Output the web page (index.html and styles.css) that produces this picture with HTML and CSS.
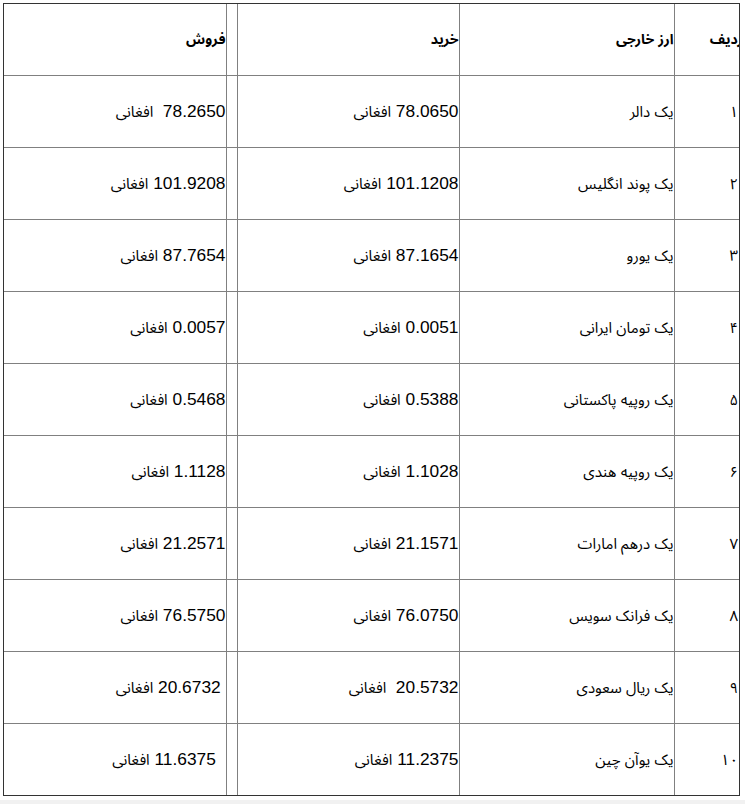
FILE: index.html
```html
<!DOCTYPE html>
<html lang="fa" dir="rtl">
<head>
<meta charset="utf-8">
<title>نرخ ارز</title>
<link rel="stylesheet" href="styles.css">
</head>
<body>
<div class="page">
  <div class="frame">
    <table class="rates">
      <colgroup>
        <col class="c-idx">
        <col class="c-name">
        <col class="c-buy">
        <col class="c-gap">
        <col class="c-sell">
      </colgroup>
      <thead>
        <tr>
          <th class="idx"><span class="clip fa">ردیف</span></th>
          <th><span class="fa">ارز خارجی</span></th>
          <th><span class="fa">خرید</span></th>
          <th></th>
          <th><span class="fa">فروش</span></th>
        </tr>
      </thead>
      <tbody>
        <tr><td class="idx fa">۱</td><td class="fa">یک دالر</td><td>78.0650 <span class="fa">افغانی</span></td><td></td><td>78.2650&nbsp; <span class="fa">افغانی</span></td></tr>
        <tr><td class="idx fa">۲</td><td class="fa">یک پوند انگلیس</td><td>101.1208 <span class="fa">افغانی</span></td><td></td><td>101.9208 <span class="fa">افغانی</span></td></tr>
        <tr><td class="idx fa">۳</td><td class="fa">یک یورو</td><td>87.1654 <span class="fa">افغانی</span></td><td></td><td>87.7654 <span class="fa">افغانی</span></td></tr>
        <tr><td class="idx fa">۴</td><td class="fa">یک تومان ایرانی</td><td>0.0051 <span class="fa">افغانی</span></td><td></td><td>0.0057 <span class="fa">افغانی</span></td></tr>
        <tr><td class="idx fa">۵</td><td class="fa">یک روپیه پاکستانی</td><td>0.5388 <span class="fa">افغانی</span></td><td></td><td>0.5468 <span class="fa">افغانی</span></td></tr>
        <tr><td class="idx fa">۶</td><td class="fa">یک روپیه هندی</td><td>1.1028 <span class="fa">افغانی</span></td><td></td><td>1.1128 <span class="fa">افغانی</span></td></tr>
        <tr><td class="idx fa">۷</td><td class="fa">یک درهم امارات</td><td>21.1571 <span class="fa">افغانی</span></td><td></td><td>21.2571 <span class="fa">افغانی</span></td></tr>
        <tr><td class="idx fa">۸</td><td class="fa">یک فرانک سویس</td><td>76.0750 <span class="fa">افغانی</span></td><td></td><td>76.5750 <span class="fa">افغانی</span></td></tr>
        <tr><td class="idx fa">۹</td><td class="fa">یک ریال سعودی</td><td>20.5732&nbsp; <span class="fa">افغانی</span></td><td></td><td>&nbsp;20.6732 <span class="fa">افغانی</span></td></tr>
        <tr><td class="idx fa">۱۰</td><td class="fa">یک یوآن چین</td><td>11.2375 <span class="fa">افغانی</span></td><td></td><td>&nbsp;&nbsp;11.6375 <span class="fa">افغانی</span></td></tr>
      </tbody>
    </table>
  </div>
</div>
</body>
</html>
```
FILE: styles.css
```css
html {
  background: #f1f1f1;
}
body {
  margin: 0;
  font-family: "Liberation Sans", "Noto Sans Arabic", sans-serif;
  font-size: 13pt;
  color: #000;
}
.page {
  background: #fff;
  padding: 3px 5px 2px 3px;
  height: 795px;
}
.frame {
  width: 735px;
  border: 1px solid #333;
}
.rates {
  width: 735px;
  table-layout: fixed;
  border-collapse: collapse;
  border-spacing: 0;
}
.c-idx { width: 65px; }
.c-name { width: 215px; }
.c-buy { width: 222px; }
.c-gap { width: 11px; }
.c-sell { width: 222px; }
.rates th,
.rates td {
  height: 71px;
  padding: 0;
  text-align: right;
  vertical-align: middle;
  border: 1px solid #808080;
  white-space: nowrap;
}
.rates th {
  font-weight: bold;
}
.rates thead tr th {
  border-top: 0;
}
.rates tbody tr:last-child td {
  border-bottom: 0;
}
.rates th:first-child,
.rates td:first-child {
  border-right: 0;
}
.rates th:last-child,
.rates td:last-child {
  border-left: 0;
}
.fa {
  font-size: 15px;
}
.rates th .fa {
  font-size: 14px;
}
.rates th.idx {
  overflow: hidden;
}
.rates th.idx .clip {
  display: inline-block;
  margin-right: -4px;
}
.rates td.idx {
  padding-right: 1px;
}
```
